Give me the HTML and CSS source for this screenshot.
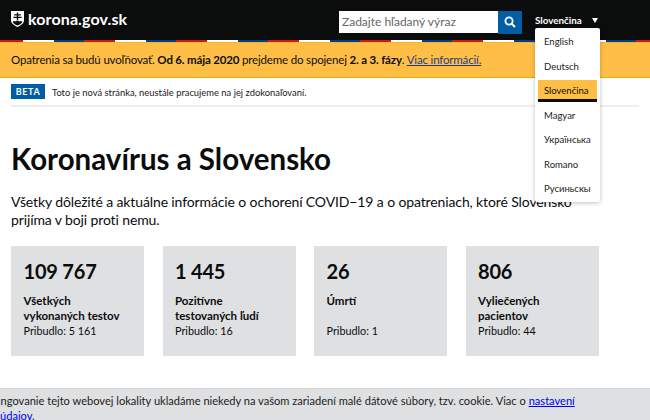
FILE: index.html
```html
<!DOCTYPE html>
<html lang="sk">
<head>
<meta charset="utf-8">
<title>korona.gov.sk</title>
<link rel="stylesheet" href="styles.css">
</head>
<body>
<header class="header">
  <a class="logo" href="#">
    <svg class="crest" width="13" height="16" viewBox="0 0 13 16"><path fill="#fff" d="M0 0h13v9c0 3.700-3.300 5.500-6.500 7C3.300 14.500 0 12.700 0 9z"/><path fill="#0b0c0c" d="M5.800 1.500h1.400v1.700h2.600v1.200H7.200v1.400h3.400V7H7.200v2.300H5.800V7H2.400V5.800h3.400V4.400H3.200V3.200h2.600z"/><path fill="#0b0c0c" d="M1.600 11c1.100-1.300 2.200-1.300 2.700-.4.700-1.100 3.700-1.100 4.400 0 .5-.9 1.600-.9 2.700.4-1.300 1.900-2.900 2.900-4.900 3.600-2-.7-3.600-1.700-4.900-3.600z"/></svg>
    <span>korona.gov.sk</span>
  </a>
  <form class="search">
    <input class="search-input" type="text" placeholder="Zadajte hľadaný výraz">
    <button class="search-btn" type="button" aria-label="Hľadať">
      <svg width="12" height="12" viewBox="0 0 12 12"><circle cx="5" cy="5" r="3.600" fill="none" stroke="#fff" stroke-width="1.800"/><path d="M7.700 7.700 11 11" stroke="#fff" stroke-width="2"/></svg>
    </button>
  </form>
  <div class="lang">
    <span class="lang-current">Slovenčina</span><span class="caret"></span>
  </div>
</header>
<div class="stripe"></div>
<div class="notice">Opatrenia sa budú uvoľňovať. <b>Od 6. mája 2020</b> prejdeme do spojenej <b>2. a 3. fázy</b>. <a href="#">Viac informácií.</a></div>
<main class="main">
  <div class="beta"><strong class="tag">BETA</strong><span class="beta-text">Toto je nová stránka, neustále pracujeme na jej zdokonaľovaní.</span></div>
  <h1 class="title">Koronavírus a Slovensko</h1>
  <p class="lead">Všetky dôležité a aktuálne informácie o ochorení COVID−19 a o opatreniach, ktoré Slovensko<br>prijíma v boji proti nemu.</p>
  <div class="cards">
    <section class="card"><div class="num">109 767</div><div class="label">Všetkých<br>vykonaných testov</div><div class="delta">Pribudlo: 5 161</div></section>
    <section class="card"><div class="num">1 445</div><div class="label">Pozitívne<br>testovaných ľudí</div><div class="delta">Pribudlo: 16</div></section>
    <section class="card"><div class="num">26</div><div class="label">Úmrtí<br>&nbsp;</div><div class="delta">Pribudlo: 1</div></section>
    <section class="card"><div class="num">806</div><div class="label">Vyliečených<br>pacientov</div><div class="delta">Pribudlo: 44</div></section>
  </div>
  <p class="updated">Aktualizované 7. 5. 2020 <a href="#">Detailnejšie štatistiky</a></p>
</main>
<ul class="menu">
  <li>English</li>
  <li>Deutsch</li>
  <li class="active">Slovenčina</li>
  <li>Magyar</li>
  <li>Українська</li>
  <li>Romano</li>
  <li>Русиньскы</li>
</ul>
<div class="cookie"><p class="cookie-text">Na zabezpečenie fungovanie tejto webovej lokality ukladáme niekedy na vašom zariadení malé dátové súbory, tzv. cookie. Viac o <a href="#">nastavení</a><br><a href="#">údajov</a>.</p></div>
</body>
</html>
```
FILE: styles.css
```css
* { box-sizing: border-box; }
html, body { margin: 0; height: 420px; overflow: hidden; }
body { position: relative; width: 650px; background: #fff; color: #0b0c0c; font-family: "Lato", "Noto Sans", sans-serif; }
a { color: inherit; }
.header { height: 40px; background: #0b0c0c; display: flex; align-items: center; padding: 0 0 0 11px; color: #fff; }
.logo { display: flex; align-items: center; gap: 4px; color: #fff; text-decoration: none; font-weight: 700; font-size: 16px; letter-spacing: .12px; width: 328px; margin-top: -3px; }
.crest { display: block; }
.search { display: flex; align-items: flex-start; height: 23px; margin-top: 4px; }
.search-input { width: 159px; height: 22px; border: 0; background: #fff; padding: 0 3px; font: 12px "Lato", sans-serif; color: #222; outline: 0; border-radius: 0; }
.search-input::placeholder { color: #666; opacity: 1; }
.search-btn { width: 24px; height: 23px; border: 0; padding: 0; background: #005ea5; display: flex; align-items: center; justify-content: center; }
.lang { display: flex; align-items: center; margin-left: 13px; font-size: 9.800px; font-weight: 700; }
.caret { margin-left: 10px; width: 0; height: 0; border-left: 3.500px solid transparent; border-right: 3.500px solid transparent; border-top: 5px solid #fff; }
.stripe { height: 2px; background: repeating-linear-gradient(90deg, #d0190f 0 23px, #fff 23px 54px, #003e8e 54px 84px, #d0190f 84px 92px); }
.notice { height: 36px; background: #ffbf47; border-bottom: 1px solid #f0a500; border-top: 1px solid #f7b32e; padding-left: 11px; font-size: 11.500px; letter-spacing: -.17px; line-height: 33px; white-space: nowrap; }
.notice a { color: #1d3a8a; }
.main { padding: 0 11px; }
.beta { height: 29px; display: flex; align-items: center; gap: 7px; border-bottom: 2px solid #eeeeee; font-size: 9.400px; color: #222; white-space: nowrap; }
.tag { width: 34px; height: 15px; background: #005ea5; color: #fff; font-size: 9px; letter-spacing: .6px; line-height: 15px; text-align: center; }
.beta-text { margin-top: 2px; }
.title { margin: 33px 0 0; font-size: 29.500px; line-height: 38px; font-weight: 700; white-space: nowrap; }
.lead { margin: 15px 0 0; font-size: 14px; letter-spacing: -.12px; line-height: 18px; white-space: nowrap; }
.cards { margin-top: 17px; display: grid; grid-template-columns: repeat(4, 133px); column-gap: 18.500px; }
.card { height: 110px; background: #dee0e2; padding: 12.500px 12.500px 0; }
.num { font-size: 20px; letter-spacing: -.2px; line-height: 25px; font-weight: 700; }
.label { margin-top: 9px; font-size: 11.500px; line-height: 15px; font-weight: 700; white-space: nowrap; }
.delta { font-size: 10.800px; line-height: 15px; white-space: nowrap; }
.updated { margin: 28px 0 0; padding-left: 2px; font-size: 10.400px; line-height: 14px; color: #555; white-space: nowrap; }
.updated a { color: #005ea5; text-decoration: none; }
.menu { position: absolute; left: 535px; top: 28px; width: 65px; height: 174px; margin: 0; padding: 2px 3px; list-style: none; background: #fff; border-radius: 2px; box-shadow: 0 1px 4px rgba(0,0,0,.25); font-size: 9.500px; color: #222; }
.menu li { height: 24.500px; line-height: 24px; padding-left: 6px; white-space: nowrap; }
.menu .active { height: 22px; margin: 1px 0 1.500px; line-height: 22px; background: #ffbf47; border-bottom: 3px solid #0b0c0c; color: #0b0c0c; }
.cookie { position: absolute; left: 0; right: 0; top: 388px; height: 32px; background: #dee0e2; border-top: 1px solid #d4d6d8; overflow: hidden; }
.cookie-text { margin: 0; padding-top: 4px; font-size: 11.100px; line-height: 15px; white-space: nowrap; color: #222; text-indent: -94.500px; }
.cookie-text a { color: #0000ee; }
```
